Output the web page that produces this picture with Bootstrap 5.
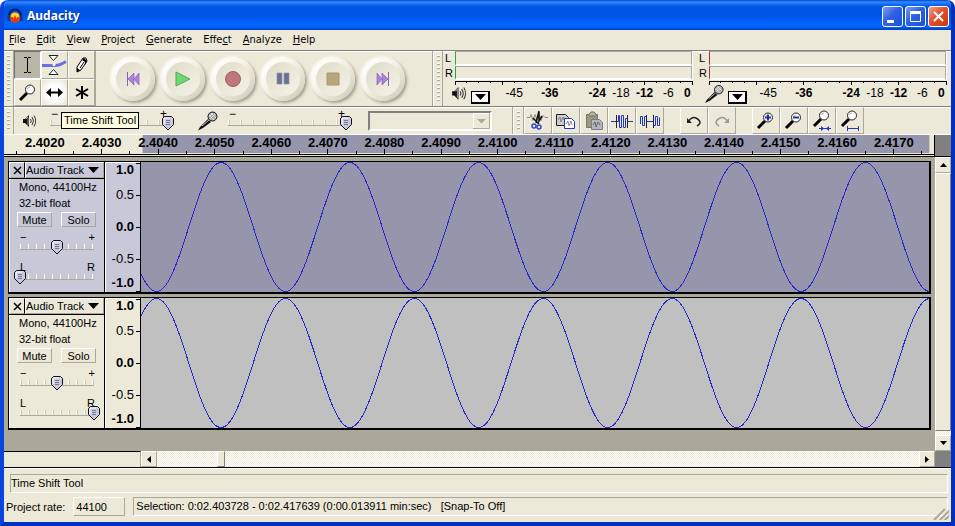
<!DOCTYPE html>
<html lang="en">
<head>
<meta charset="utf-8">
<meta name="viewport" content="width=device-width, initial-scale=1">
<title>Audacity</title>
<link href="https://cdn.jsdelivr.net/npm/bootstrap@5.3.0/dist/css/bootstrap.min.css" rel="stylesheet">
<style>
:root{--face:#ece9d8;--shade:#aca899;--dark:#808080;--sel:#9595ac;--track:#c8c8d8}
body{font:11px/14px "Liberation Sans",Arial,sans-serif;color:#000;background:#fff}
button,input,select{font:inherit;color:inherit;border-radius:0;padding:0}
svg{display:block;flex:none}
.win{min-height:100vh;background:var(--face);border:4px solid #0a45e0;border-top:0;border-color:#0a45e0 #0030c0 #0030c0 #0a45e0;border-radius:8px 8px 0 0;overflow:hidden}
.titlebar{height:30px;margin:0 -4px;padding:2px 6px 0 7px;gap:4px;background:linear-gradient(#0a3fc8 0,#2f8cff 2px,#1470f5 4px,#0054e3 7px,#0055e5 16px,#0066ff 24px,#0062f5 27px,#003cc0 30px)}
.titlebar h1{font:700 12px/16px "Noto Sans","Open Sans",sans-serif;color:#fff;text-shadow:1px 1px 0 #0a2a86}
.capbtn{width:21px;height:21px;border:1px solid #fff;border-radius:3px;background:linear-gradient(135deg,#7d9ff2,#2f62e2 45%,#1b4fd6)}
.capbtn.quit{background:linear-gradient(135deg,#f0a088,#e2512d 45%,#c8380f)}
.menus{height:20px;padding:0 0 0 5px;gap:11px}
.menus a{font:11px/14px "DejaVu Sans Condensed","Noto Sans",sans-serif;font-stretch:condensed;color:#000;text-decoration:none}
.strip{border-top:1px solid var(--dark);box-shadow:inset 0 1px #fff}
.grip{width:10px;padding:4px 0 4px 3px;border-right:1px solid var(--shade)}
.grip i{display:block;width:3px;height:100%;background:repeating-linear-gradient(#fff 0 1px,#aca899 1px 2px,transparent 2px 4px)}
.tools{display:grid;grid-template-columns:repeat(3,27px);grid-template-rows:28px 27px;border-right:1px solid var(--shade)}
.flatbtn{background:var(--face);border:1px solid;border-color:#fff var(--shade) var(--shade) #fff;display:flex;align-items:center;justify-content:center}
.flatbtn.down{background:#b9b5a7;border-color:#77746a #fff #fff #77746a}
.flatbtn.hover{background:radial-gradient(#fff 40%,#ece9d8 90%)}
.transport{gap:6px;padding:0 27px 0 15px;border-right:1px solid var(--shade);box-shadow:inset 0 1px #fff,1px 0 #fff}
.round{width:44px;height:44px;border:0;border-radius:50%;background:linear-gradient(135deg,#fff 10%,#f6f4ea 40%,#e6e3d3 65%,#cbc7b8);box-shadow:2px 2px 3px #a5a193,-1px -1px 2px #fbfaf3;display:grid;place-items:center}
.round span{width:34px;height:34px;border-radius:50%;background:linear-gradient(135deg,#dedac8,#ebe8d8 50%,#f5f3e9);display:grid;place-items:center}
.meter{flex:1 1 0;min-width:0;display:grid;grid-template-columns:12px 1fr;grid-template-rows:15px 14px 25px;padding-right:5px;line-height:14px}
.meter b{font-weight:400;padding-left:2px}
.bar{border:1px solid;border-color:var(--shade) var(--shade) #fff var(--mark);border-bottom-width:2px;box-shadow:1px 0 #fff}
.play{--mark:#29a64a}.rec{--mark:#b03038}
.scale{grid-column:2;width:100%;height:25px;overflow:visible;font-size:12px}
.meterwrap{flex:1 1 0;min-width:0}
.metertools{position:absolute;left:8px;bottom:2px;gap:4px}
.drop{width:19px;height:13px;border:2px solid #000;border-width:1px 2px 2px 1px;background:#fff;display:grid;place-items:center}
.row2{height:28px}
.knob{appearance:none;-webkit-appearance:none;display:block;width:100%;height:15px;margin:0;background:linear-gradient(#aca899,#aca899) 6px 9px/calc(100% - 12px) 1px no-repeat,repeating-linear-gradient(90deg,#fff 0 1px,#cbc8b9 1px 2px,transparent 2px var(--step)) 6px 4px/calc(100% - 12px) 5px no-repeat}
.knob::-webkit-slider-thumb{-webkit-appearance:none;width:12px;height:15px;background:url("data:image/svg+xml,%3Csvg xmlns='http://www.w3.org/2000/svg' width='12' height='15'%3E%3Cpath d='M2.500.5h7l2 2v6l-5.500 5.500-5.500-5.500v-6z' fill='%23c9c9df' stroke='%23111'/%3E%3Cpath d='M2 8V3l1-1h5' fill='none' stroke='%23fff'/%3E%3Cpath d='M4 4.500h4M4 6.500h4M4 8.500h4' stroke='%23777790'/%3E%3C/svg%3E")}
.slide{position:relative;--step:12px;width:130px;padding-top:5px}
.slide .lo,.slide .hi{position:absolute;top:-4px;left:7px;font-size:12px;line-height:14px}
.slide .hi{left:auto;right:7px}
.tip{position:absolute;left:17px;top:1px;height:17px;padding:0 2px;border:1px solid #000;background:#ffffe1;line-height:15px;font-size:11px;white-space:nowrap;z-index:3}
.combo{width:124px;height:20px;appearance:none;background:var(--face) url("data:image/svg+xml,%3Csvg xmlns='http://www.w3.org/2000/svg' width='17' height='16'%3E%3Cpath d='M.5 15V.5H16' fill='none' stroke='%23fff'/%3E%3Cpath d='M16.500 0v15.500H0' fill='none' stroke='%23aca899'/%3E%3Cpath d='M4 6h9L8.500 10.500z' fill='%23aca899'/%3E%3C/svg%3E") right 0 top 0 no-repeat;border:2px solid;border-color:#808080 #fff #fff #808080}
.split{width:2px;margin-left:20px;background:var(--shade);border-right:1px solid #fff}
.editbtn{width:28px}
.timeline{height:23px;border-top:1px solid #fff;border-bottom:1px solid #000}
.timeline svg{flex:1;height:22px;border-right:1px solid #000;font-weight:700;font-size:13px}
.corner{width:16px;background:#808080}
.tracks{background:#aca899;padding:4px 4px 0;display:flex;flex-direction:column;gap:3px}
.track{display:grid;grid-template-columns:96px 36px 1fr;grid-template-rows:minmax(0,1fr);height:133px;border:1px solid #000;border-width:1px 2px 2px 1px;--panel:var(--face);--wave:#c0c0c0}
.track.on{--panel:var(--track);--wave:var(--sel)}
.panel{background:var(--panel);border-right:1px solid #000;box-shadow:inset 1px 1px #fff}
.head{height:17px;border-bottom:1px solid #000}
.head button{background:none;border:1px solid;border-color:#fff var(--shade) var(--shade) #fff}
.head .shut{width:16px;border-right:1px solid #000}
.info{line-height:16px;padding:0 0 0 10px;white-space:nowrap}
.pair{gap:9px;padding:1px 0 0 8px}
.pair button{width:35px;height:15px;line-height:12px;background:none;border:1px solid;border-color:#fff var(--shade) var(--shade) #fff}
.panel .slide{--step:8px;width:86px;margin-left:5px;padding-top:13px}
.panel .slide .lo,.panel .slide .hi{top:3px;left:6px;font-size:11px}
.panel .slide .hi{left:auto;right:5px}
.panel .pan{margin-top:2px}
.vscale{background:var(--panel);font-size:13px;border-right:1px solid #000;box-shadow:inset 1px 1px #fff}
.wave{width:100%;height:100%;background:var(--wave)}
.hatch{background:repeating-conic-gradient(#fff 0 25%,#ece9d8 0 50%) 0 0/2px 2px}
.sb{width:16px;height:16px;flex:none;background:var(--face);border:1px solid;border-color:#fff var(--shade) var(--shade) #fff;display:grid;place-items:center}
.thumb{background:var(--face);border:1px solid;border-color:#fff var(--dark) var(--dark) #fff}
.vbar{width:16px}
.hbar{height:17px;border-bottom:1px solid #000}
.hbar .label{width:137px;border-top:1px solid #000;border-right:1px solid var(--shade)}
.hthumb{width:8px;margin-left:60px}
.status{padding:5px 3px 6px 2px;border-top:1px solid #fff;position:relative}
.sunk{border:1px solid;border-color:var(--shade) #fff #fff var(--shade);height:19px;line-height:17px;padding-left:2px}
.rate{width:52px;height:19px;background:none;border:1px solid;border-color:#fff var(--shade) var(--shade) #fff;padding-left:2px}
.resize{position:absolute;right:2px;bottom:2px}
</style>
<script src="https://cdn.jsdelivr.net/npm/bootstrap@5.3.0/dist/js/bootstrap.bundle.min.js"></script>
</head>
<body>
<svg width="0" height="0" class="position-absolute" aria-hidden="true"><defs>
<symbol id="speaker" viewBox="0 0 14 14"><path d="M1 5h2l4-4v12l-4-4H1z" fill="#111"/><path d="M4 5l2-2v8" stroke="#999" fill="none"/><path d="M8.500 5q1.500 2 0 4M10 3q3 4 0 8M12 1.500q3.500 5.500 0 11" fill="none" stroke="#333"/></symbol>
<symbol id="mic" viewBox="0 0 20 20"><path d="M0 19.500l2-3.500 8-8 3 3-8 6z" fill="#111"/><path d="M4 15l7-6" stroke="#bbb"/><circle cx="14.500" cy="5.500" r="4.500" fill="#aaa" stroke="#111"/><path d="M11 4l5 5M13 2l5 5M12 8l5-5M11 6l4-4" stroke="#eee" stroke-width=".8"/></symbol>
<symbol id="lens" viewBox="0 0 20 20"><path d="M2 17l7-7" stroke="#000" stroke-width="3"/><circle cx="12" cy="6.500" r="4.500" fill="#fff" stroke="#222"/><path d="M9.500 6q.5-2 2.500-2" fill="none" stroke="#aaa"/></symbol>
</defs></svg>

<div class="win d-flex flex-column">
  <header class="titlebar d-flex align-items-center">
    <svg width="16" height="16" viewBox="0 0 16 16"><circle cx="8" cy="9.500" r="5" fill="#ffd51c"/><path d="M3.500 12h9q-2 3-4.500 3t-4.500-3z" fill="#e83410"/><path d="M3 10.500l2-2 1.500 2L8 7l1.500 3.500 1.500-2 2 2-2 1.500H5z" fill="#e83410"/><path d="M2 9C1-1 15-1 14 9" fill="none" stroke="#10185a" stroke-width="2"/><path d="M2 7v6M14 7v6" stroke="#26307c" stroke-width="3"/></svg>
    <h1 class="m-0 me-auto">Audacity</h1>
    <div class="d-flex" style="gap:2px">
      <button class="capbtn" aria-label="Minimize"><svg width="19" height="19"><path d="M4 13h7v3H4z" fill="#fff"/></svg></button>
      <button class="capbtn" aria-label="Maximize"><svg width="19" height="19"><path d="M4.500 5v9.500h10V5" fill="none" stroke="#fff"/><path d="M4 4h11v3H4z" fill="#fff"/></svg></button>
      <button class="capbtn quit" aria-label="Close"><svg width="19" height="19"><path d="M5 5l9 9M14 5l-9 9" stroke="#fff" stroke-width="2"/></svg></button>
    </div>
  </header>

  <nav class="menus d-flex align-items-center">
    <a href="#"><u>F</u>ile</a><a href="#"><u>E</u>dit</a><a href="#"><u>V</u>iew</a><a href="#"><u>P</u>roject</a><a href="#"><u>G</u>enerate</a><a href="#">Effe<u>c</u>t</a><a href="#"><u>A</u>nalyze</a><a href="#"><u>H</u>elp</a>
  </nav>

  <section class="strip d-flex" aria-label="Control toolbar">
    <div class="grip"><i></i></div>
    <div class="tools">
      <button class="flatbtn down" aria-label="Selection tool"><svg width="11" height="17"><path d="M2 .5h3M6 .5h3M5.500 1v14M2 15.500h3M6 15.500h3" stroke="#000"/></svg></button>
      <button class="flatbtn" aria-label="Envelope tool"><svg width="25" height="22"><path d="M7 1.500h9l-4.500 5zM7 20.500h9l-4.500-5z" fill="#fff" stroke="#222"/><path d="M0 11.500h13q5 0 11-4" fill="none" stroke="#6a70e0" stroke-width="3"/><circle cx="12" cy="10.500" r="1.500" fill="#fff"/></svg></button>
      <button class="flatbtn" aria-label="Draw tool"><svg width="14" height="18"><path d="M2 16l0-5 6-9 3 0 1 3-6 9z" fill="#fff" stroke="#000"/><path d="M2 16v-4l3 2zM9 2l3 3-2 4V6L7 4z" fill="#000"/><path d="M5 12l4-6" stroke="#000"/></svg></button>
      <button class="flatbtn" aria-label="Zoom tool"><svg width="20" height="20"><use href="#lens"/></svg></button>
      <button class="flatbtn hover" aria-label="Time shift tool"><svg width="17" height="11"><path d="M3 5.500h11" stroke="#000" stroke-width="2"/><path d="M5 1v9L0 5.500zM12 1v9l5-4.500z"/></svg></button>
      <button class="flatbtn" aria-label="Multi tool"><svg width="14" height="15"><path d="M7 1v13M1 4l12 7M13 4L1 11" stroke="#000" stroke-width="2"/></svg></button>
    </div>
    <div class="transport d-flex align-items-center">
      <button class="round" aria-label="Skip to start"><span><svg width="14" height="14"><path d="M1.500 0v14" stroke="#8563b7" stroke-width="1"/><path d="M8 1v12L2 7zM13 1v12L8 7z" fill="#ad82dc" stroke="#8865b8" stroke-width=".7"/></svg></span></button>
      <button class="round" aria-label="Play"><span><svg width="16" height="16"><path d="M1 1v14l14-7z" fill="#70d870" stroke="#59a75a"/></svg></span></button>
      <button class="round" aria-label="Record"><span><svg width="18" height="18"><circle cx="9" cy="9" r="7.500" fill="#bf777b" stroke="#9c5d61"/></svg></span></button>
      <button class="round" aria-label="Pause"><span><svg width="14" height="14"><path d="M1 1h5v11H1zM8 1h5v11H8z" fill="#687294" stroke="#8c93aa" stroke-width=".7"/></svg></span></button>
      <button class="round" aria-label="Stop"><span><svg width="14" height="14"><path d="M1 1h12v12H1z" fill="#b7a77f" stroke="#a69770"/></svg></span></button>
      <button class="round" aria-label="Skip to end"><span><svg width="14" height="14"><path d="M12.500 0v14" stroke="#8563b7"/><path d="M1 1v12l5-6zM6 1v12l6-6z" fill="#ad82dc" stroke="#8865b8" stroke-width=".7"/></svg></span></button>
    </div>
    <div class="grip ps-1"><i></i></div>
    <div class="meterwrap position-relative d-flex">
      <div class="meter play"><b>L</b><div class="bar"></div><b>R</b><div class="bar"></div><svg class="scale"></svg></div>
      <div class="metertools d-flex align-items-end"><svg width="16" height="18" viewBox="0 0 15 17"><use href="#speaker" width="14" height="14"/></svg><button class="drop" aria-label="Output meter menu"><svg width="11" height="6"><path d="M0 0h11L5.500 6z"/></svg></button></div>
    </div>
    <div class="meterwrap position-relative d-flex">
      <div class="meter rec"><b>L</b><div class="bar"></div><b>R</b><div class="bar"></div><svg class="scale"></svg></div>
      <div class="metertools d-flex align-items-end"><svg width="19" height="20"><use href="#mic"/></svg><button class="drop" aria-label="Input meter menu"><svg width="11" height="6"><path d="M0 0h11L5.500 6z"/></svg></button></div>
    </div>
  </section>

  <section class="strip row2 d-flex" aria-label="Mixer and edit toolbars">
    <div class="grip"><i></i></div>
    <div class="d-flex align-items-center ps-2">
      <svg width="14" height="14"><use href="#speaker"/></svg>
      <div class="slide ms-2"><span class="lo">−</span><span class="hi">+</span><input class="knob" type="range" value="100" aria-label="Output volume"><div class="tip" role="tooltip">Time Shift Tool</div></div>
      <svg class="ms-4" width="20" height="20"><use href="#mic"/></svg>
      <div class="slide ms-1"><span class="lo">−</span><span class="hi">+</span><input class="knob" type="range" value="100" aria-label="Input volume"></div>
      <select class="combo ms-3" aria-label="Input source"><option></option></select>
    </div>
    <div class="split"></div>
    <div class="grip"><i></i></div>
    <div class="d-flex">
      <button class="flatbtn editbtn" aria-label="Cut"><svg width="22" height="22"><path d="M0 7.500h3l1-3 2 6 2-6 2 5 2-5 2 6 2-5 2 2h3" fill="none" stroke="#888"/><path d="M12 1L9 13M6 8l6 6M12 2v9l3-5" stroke="#111" stroke-width="1.500" fill="none"/><circle cx="7" cy="16" r="2" fill="none" stroke="#3148cc" stroke-width="1.500"/><circle cx="12" cy="17" r="2" fill="none" stroke="#3148cc" stroke-width="1.500"/></svg></button>
      <button class="flatbtn editbtn" aria-label="Copy"><svg width="22" height="20"><path d="M1.500 3.500h9l3 3v8h-12z" fill="#ccc" stroke="#222"/><path d="M9.500 7.500h7l3 3v7h-10z" fill="#fff" stroke="#2136c0"/><path d="M3 9l2-3 1 5 2-5 1 3M11 13l2-3 1 5 2-5 1 4" fill="none" stroke="#666" stroke-width=".7"/></svg></button>
      <button class="flatbtn editbtn" aria-label="Paste"><svg width="20" height="20"><path d="M2.500 3.500h11v13h-11z" fill="#9d9876" stroke="#777"/><path d="M5 5V3l2-2h3l2 2v2z" fill="#b8b58e" stroke="#777"/><path d="M7.500 8.500h8l3 3v7h-11z" fill="#b5b5be" stroke="#777994"/><path d="M9 14l2-3 1 5 2-5 2 3" fill="none" stroke="#666"/></svg></button>
      <button class="flatbtn editbtn" aria-label="Trim"><svg width="22" height="18"><path d="M0 9.500h6M16 9.500h6" stroke="#2136c0"/><path d="M5.500 3v13M16.500 3v13" stroke="#222"/><path d="M6 9.500h1.500v-6h1v12h2v-12h2v12h2v-9h2" fill="none" stroke="#2136c0"/></svg></button>
      <button class="flatbtn editbtn" aria-label="Silence"><svg width="22" height="18"><path d="M8 9.500h6" stroke="#2136c0"/><path d="M7.500 3v13M14.500 3v13" stroke="#222"/><path d="M1.500 12V4.500h2v9h2v-9h2M14.500 13.500h2v-9h2v9h2v-8" fill="none" stroke="#2136c0"/></svg></button>
    </div>
    <div class="d-flex ms-3">
      <button class="flatbtn editbtn" aria-label="Undo"><svg width="16" height="14"><path d="M2 8q4-6 8-4t4 5q-1 2-3 3" fill="none" stroke="#222" stroke-width="1.500"/><path d="M1 4v5h5z" fill="#222"/></svg></button>
      <button class="flatbtn editbtn" aria-label="Redo"><svg width="16" height="14"><path d="M14 8q-4-6-8-4T2 9q1 2 3 3" fill="none" stroke="#999" stroke-width="1.500"/><path d="M15 4v5h-5z" fill="#999"/></svg></button>
    </div>
    <div class="d-flex ms-3">
      <button class="flatbtn editbtn" aria-label="Zoom in"><svg width="20" height="20"><use href="#lens"/><path d="M9 6.500h6M12 3.500v6" stroke="#2230a8" stroke-width="2"/></svg></button>
      <button class="flatbtn editbtn" aria-label="Zoom out"><svg width="20" height="20"><use href="#lens"/><path d="M9 6.500h6" stroke="#2230a8" stroke-width="2"/></svg></button>
      <button class="flatbtn editbtn" aria-label="Fit selection"><svg width="20" height="22"><use href="#lens" y="-1" width="20" height="20"/><path d="M7 18.500h12" stroke="#2136c0"/><path d="M9 16l3 2.500L9 21zM17 16l-3 2.500 3 2.500z" fill="#2136c0"/></svg></button>
      <button class="flatbtn editbtn" aria-label="Fit project"><svg width="20" height="22"><use href="#lens" y="-1" width="20" height="20"/><path d="M7 18.500h12M7.500 16v5M18.500 16v5" stroke="#2136c0"/></svg></button>
    </div>
  </section>

  <div class="timeline d-flex"><svg id="ruler" role="img" aria-label="Timeline"></svg><div class="corner"></div></div>

  <div class="d-flex flex-grow-1">
    <main class="tracks flex-grow-1">
      <section class="track on">
        <div class="panel">
          <div class="head d-flex"><button class="shut d-grid" aria-label="Close track"><svg class="m-auto" width="9" height="9"><path d="M1 1l7 7M8 1L1 8" stroke="#000" stroke-width="1.500"/></svg></button><button class="flex-grow-1 d-flex align-items-center justify-content-between px-0">Audio Track<svg class="me-1" width="11" height="6"><path d="M0 0h11L5.500 6z"/></svg></button></div>
          <div class="info">Mono, 44100Hz<br>32-bit float</div>
          <div class="pair d-flex"><button>Mute</button><button>Solo</button></div>
          <div class="slide"><span class="lo">−</span><span class="hi">+</span><input class="knob" type="range" value="50" aria-label="Gain"></div>
          <div class="slide pan"><span class="lo">L</span><span class="hi">R</span><input class="knob" type="range" value="0" aria-label="Pan"></div>
        </div>
        <svg class="vscale w-100 h-100"></svg>
        <svg class="wave" viewBox="0 0 788 130" preserveAspectRatio="none" data-sign="1"></svg>
      </section>
      <section class="track">
        <div class="panel">
          <div class="head d-flex"><button class="shut d-grid" aria-label="Close track"><svg class="m-auto" width="9" height="9"><path d="M1 1l7 7M8 1L1 8" stroke="#000" stroke-width="1.500"/></svg></button><button class="flex-grow-1 d-flex align-items-center justify-content-between px-0">Audio Track<svg class="me-1" width="11" height="6"><path d="M0 0h11L5.500 6z"/></svg></button></div>
          <div class="info">Mono, 44100Hz<br>32-bit float</div>
          <div class="pair d-flex"><button>Mute</button><button>Solo</button></div>
          <div class="slide"><span class="lo">−</span><span class="hi">+</span><input class="knob" type="range" value="50" aria-label="Gain"></div>
          <div class="slide pan"><span class="lo">L</span><span class="hi">R</span><input class="knob" type="range" value="100" aria-label="Pan"></div>
        </div>
        <svg class="vscale w-100 h-100"></svg>
        <svg class="wave" viewBox="0 0 788 130" preserveAspectRatio="none" data-sign="-1"></svg>
      </section>
    </main>
    <div class="vbar hatch d-flex flex-column">
      <button class="sb" aria-label="Scroll up"><svg width="7" height="4"><path d="M0 4h7L3.500 0z"/></svg></button>
      <div class="thumb flex-grow-1"></div>
      <button class="sb mt-1" aria-label="Scroll down"><svg width="7" height="4"><path d="M0 0h7L3.500 4z"/></svg></button>
    </div>
  </div>
  <div class="hbar d-flex">
    <div class="label"></div>
    <button class="sb" aria-label="Scroll left"><svg width="4" height="7"><path d="M4 0v7L0 3.500z"/></svg></button>
    <div class="hatch d-flex flex-grow-1"><div class="thumb hthumb"></div></div>
    <button class="sb" aria-label="Scroll right"><svg width="4" height="7"><path d="M0 0v7l4-3.500z"/></svg></button>
    <div class="corner"></div>
  </div>

  <footer class="status">
    <div class="sunk ms-1 ps-0">Time Shift Tool</div>
    <div class="d-flex align-items-center mt-1 gap-2">
      <label for="rate">Project rate:</label><input class="rate" id="rate" value="44100">
      <div class="sunk flex-grow-1">Selection: 0:02.403728 - 0:02.417639 (0:00.013911 min:sec) &nbsp; [Snap-To Off]</div>
    </div>
    <svg class="resize" width="16" height="12"><path d="M0 11L11 0M5 12L16 1M10 12l6-6" transform="translate(1 1)" stroke="#aca899" stroke-width="2"/></svg>
  </footer>
</div>
<script>
const line=(x1,y1,x2,y2)=>`<line x1="${x1}" y1="${y1}" x2="${x2}" y2="${y2}" stroke="#000" shape-rendering="crispEdges"/>`;

// Meter scales: 20 divisions, long tick every fourth
const marks=[[-45,25],[-36,40],[-24,60],[-18,70],[-12,80],[-6,90],[0,98]];
document.querySelectorAll('.scale').forEach(s=>{
  let h=line('0%',1,'100%',1);
  for(let i=0;i<=20;i++)h+=line(i*5+'%',1,i*5+'%',i%4?3:5);
  for(const [v,p] of marks)h+=`<text x="${p}%" y="17" text-anchor="middle" ${v%12===0||v===-36?'font-weight="700"':''}>${v}</text>`;
  s.innerHTML=h;
});

// Timeline: positions in per cent of the ruler's width
let r='<rect x="14.900%" y="0" width="84.600%" height="18" fill="#9595ac"/>'+line('0%',19,'100%',19);
for(let i=0;i<16;i++){
  const p=4.4+i*6.085;
  r+=line(p+'%',14,p+'%',19)+line(p-3.04+'%',16,p-3.04+'%',19);
  r+=`<text x="${p}%" y="12" text-anchor="middle">${(2.402+i*.001).toFixed(4)}</text>`;
}
document.getElementById('ruler').innerHTML=r+line('98.700%',16,'98.700%',19);

// Amplitude scales
document.querySelectorAll('.vscale').forEach(s=>{
  let h='';
  [['1.0',12,1],['0.5',37,33],['0.0',69,65],['-0.5',101,97],['-1.0',125,129]].forEach(([t,y,k])=>{
    h+=`<text x="29" y="${y}" text-anchor="end" ${t.endsWith('0')?'font-weight="700"':''}>${t}</text>`+line(31,k,36,k);
  });
  s.innerHTML=h;
});

// Sine waves
document.querySelectorAll('.wave').forEach(s=>{
  let d='';
  for(let x=0;x<=788;x++)d+=(x?'L':'M')+x+' '+(65-64.500*s.dataset.sign*Math.cos((x-80)*2*Math.PI/128.900)).toFixed(1);
  s.innerHTML=`<path d="${d}" fill="none" stroke="#2828cc" vector-effect="non-scaling-stroke" shape-rendering="crispEdges"/>`;
});
</script>
</body>
</html>
